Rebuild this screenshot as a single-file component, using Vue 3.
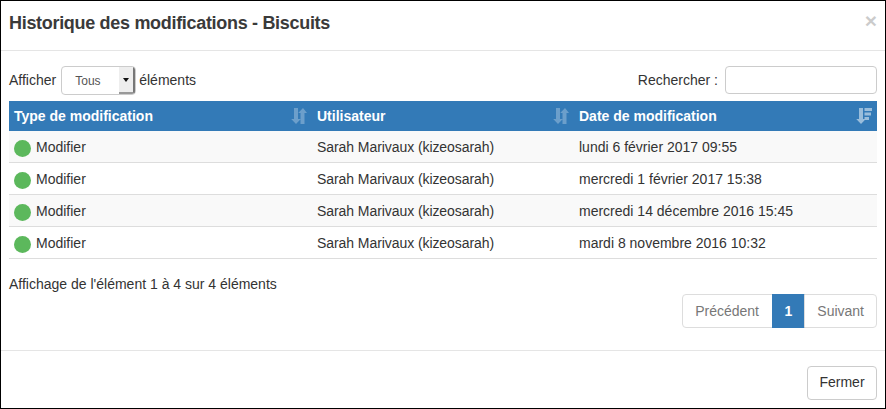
<script setup>
const rows = [
  'lundi 6 février 2017 09:55',
  'mercredi 1 février 2017 15:38',
  'mercredi 14 décembre 2016 15:45',
  'mardi 8 novembre 2016 10:32',
]
</script>

<template>
  <div class="modal">
    <header class="head">
      <h4>Historique des modifications - Biscuits</h4>
      <span class="close">×</span>
    </header>
    <main class="body">
      <div class="tools">
        <div class="length">
          <span>Afficher</span>
          <div class="select"><span class="val">Tous</span><span class="arrow"><i></i></span></div>
          <span>éléments</span>
        </div>
        <div class="search">
          <span>Rechercher :</span>
          <div class="input"></div>
        </div>
      </div>
      <div class="table">
        <div class="row th">
          <div class="c1">Type de modification
            <svg class="sort" viewBox="0 0 16 16"><path d="M3 0h4v11h2.800L5 16 .2 11H3zM12 0l4 5h-2.500v11h-4V5H7.200z"/></svg>
          </div>
          <div class="c2">Utilisateur
            <svg class="sort" viewBox="0 0 16 16"><path d="M3 0h4v11h2.800L5 16 .2 11H3zM12 0l4 5h-2.500v11h-4V5H7.200z"/></svg>
          </div>
          <div class="c3">Date de modification
            <svg class="sort on" viewBox="0 0 16 16"><path d="M3 0h4v11h2.800L5 16 .2 11H3z"/><path d="M8.500 0H16v3H8.500zM8.500 4.500h6.500v3H8.500zM8.500 9h4.500v3H8.500z"/></svg>
          </div>
        </div>
        <div v-for="(d, i) in rows" :key="d" class="row td" :class="{ odd: i % 2 === 0 }">
          <div class="c1"><span class="dot"></span>Modifier</div>
          <div class="c2 name">Sarah Marivaux (kizeosarah)</div>
          <div class="c3">{{ d }}</div>
        </div>
      </div>
      <p class="info">Affichage de l'élément 1 à 4 sur 4 éléments</p>
      <nav class="pager">
        <span class="pg first">Précédent</span>
        <span class="pg cur">1</span>
        <span class="pg last">Suivant</span>
      </nav>
    </main>
    <footer class="foot"><button class="btn">Fermer</button></footer>
  </div>
</template>

<style>
html, body { margin: 0; background: #fff; }
</style>

<style scoped>
.modal {
  width: 886px;
  height: 409px;
  box-sizing: border-box;
  border: 1px solid #000;
  background: #fff;
  font-family: "Liberation Sans", Arial, sans-serif;
  font-size: 14px;
  line-height: 20px;
  color: #333;
  display: flex;
  flex-direction: column;
  overflow: hidden;
}
.head {
  height: 50px;
  box-sizing: border-box;
  border-bottom: 1px solid #e5e5e5;
  display: flex;
  justify-content: space-between;
  padding: 0 8px;
  flex: none;
}
h4 {
  margin: 0;
  font-size: 18px;
  font-weight: 700;
  line-height: 45px;
  letter-spacing: -0.31px;
  color: #3a3a3a;
}
.close {
  font-size: 21px;
  font-weight: 700;
  color: #000;
  opacity: .2;
  line-height: 40px;
}
.body {
  flex: 1;
  padding: 15px 8px 0;
  display: flex;
  flex-direction: column;
}
.tools {
  display: flex;
  justify-content: space-between;
  align-items: center;
  height: 28px;
  margin-bottom: 7px;
}
.length, .search { display: flex; align-items: center; }
.select {
  width: 75px;
  height: 29px;
  box-sizing: border-box;
  margin: 1px 3px 0 5px;
  border: 1px solid #ccc;
  border-radius: 4px;
  display: flex;
  overflow: hidden;
  font-size: 12px;
  color: #555;
}
.val { flex: 1; padding-left: 13px; line-height: 27px; margin-top: 1px; }
.arrow {
  width: 14px;
  background: #eee;
  border-right: 2px solid #777;
  border-bottom: 2px solid #999;
  display: flex;
  align-items: center;
  justify-content: center;
}
.arrow i {
  width: 0; height: 0;
  border-left: 3px solid transparent;
  border-right: 3px solid transparent;
  border-top: 4px solid #111;
}
.input {
  width: 150px;
  height: 26px;
  margin-left: 7px;
  border: 1px solid #ccc;
  border-radius: 4px;
}
.table { display: flex; flex-direction: column; }
.row { display: grid; grid-template-columns: 303px 262px 303px; }
.row > div { padding: 0 5px; position: relative; box-sizing: border-box; }
.th {
  height: 30px;
  background: #337ab7;
  color: #fff;
  font-weight: 700;
  align-items: center;
}
.th > div { line-height: 30px; height: 30px; }
.sort {
  position: absolute;
  right: 5px;
  top: 7px;
  width: 16px;
  height: 16px;
  fill: #fff;
  opacity: .28;
}
.sort.on { opacity: .5; }
.td {
  height: 32px;
  border-bottom: 1px solid #ddd;
  box-sizing: border-box;
  align-items: start;
  padding-top: 6px;
  color: #333;
}
.td > div { display: flex; align-items: center; }
.name { letter-spacing: -0.07px; }
.odd { background: #f9f9f9; }
.dot {
  width: 17px;
  height: 17px;
  border-radius: 50%;
  background: #5cb85c;
  margin-right: 5px;
  margin-top: 3px;
  flex: none;
}
.info { margin: 15px 0 0; line-height: 20px; }
.pager { display: flex; justify-content: flex-end; margin-top: 0; }
.pg {
  height: 34px;
  box-sizing: border-box;
  border: 1px solid #ddd;
  line-height: 32px;
  padding: 0 12px;
  color: #777;
  margin-left: -1px;
}
.first { border-radius: 4px 0 0 4px; padding-left: 12.5px; padding-right: 12.5px; }
.last { border-radius: 0 4px 4px 0; }
.cur { background: #337ab7; border-color: #337ab7; color: #fff; font-weight: 700; }
.foot {
  height: 58px;
  flex: none;
  box-sizing: border-box;
  border-top: 1px solid #e5e5e5;
  display: flex;
  justify-content: flex-end;
  padding: 15px 8px 0;
}
.btn {
  width: 70px;
  height: 34px;
  background: #fff;
  border: 1px solid #ccc;
  border-radius: 4px;
  font: inherit;
  color: #333;
  padding: 0 0 2px;
}
</style>
